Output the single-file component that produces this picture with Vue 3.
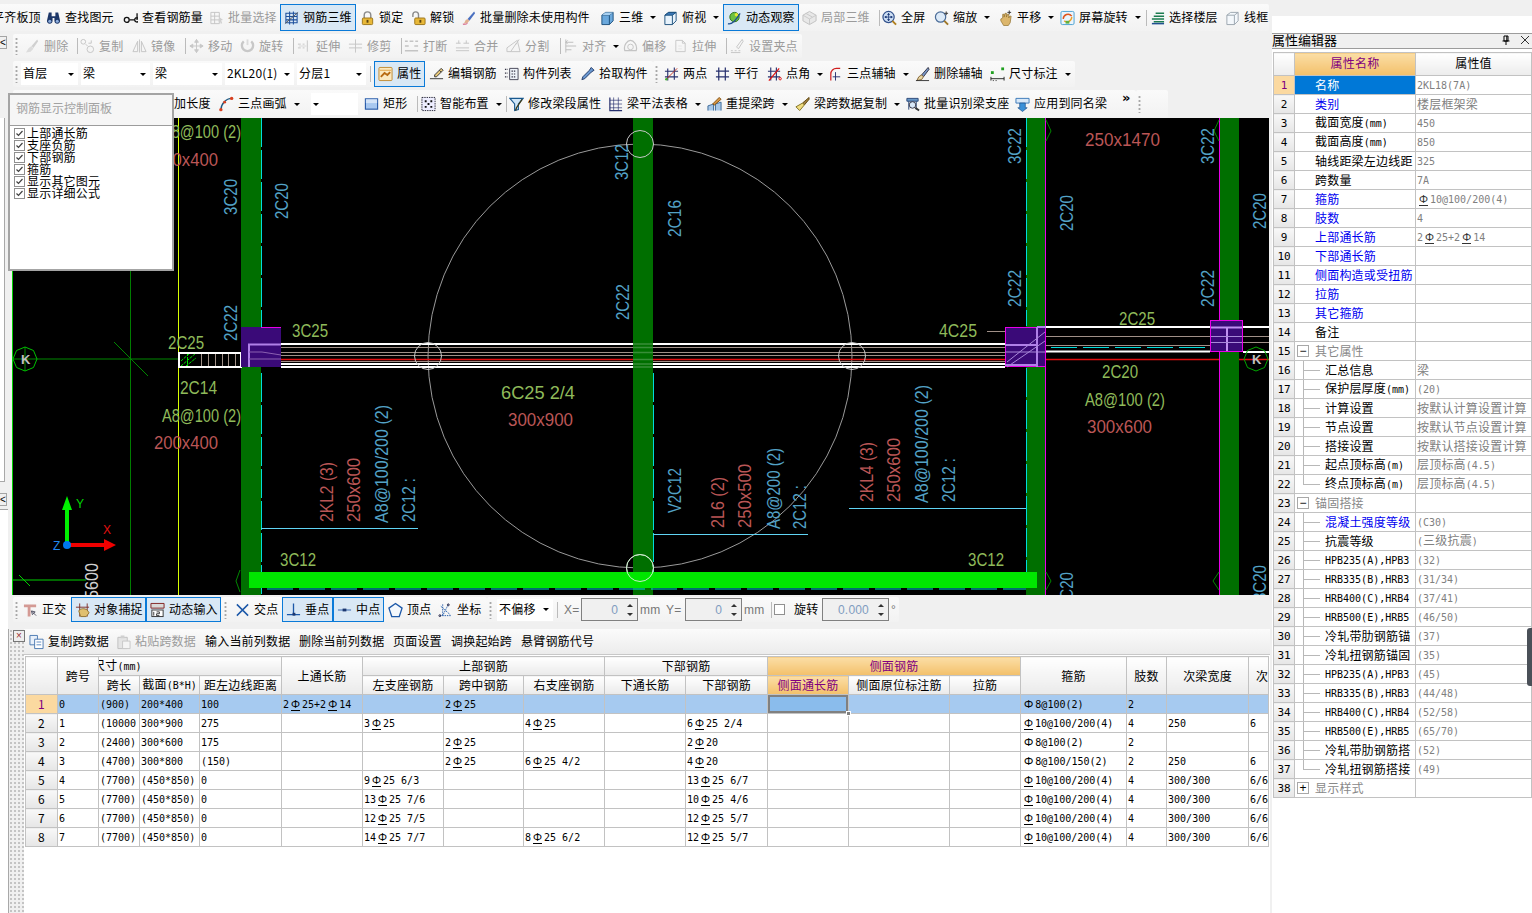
<script setup>
// toolbar icons, 16x16 boxes
const ic = {
  binoc: '<path d="M3 2h3v4h4V2h3l2 9a3 3 0 1 1-6 0V8H7v3a3 3 0 1 1-6 0z" fill="#1d3768"/><circle cx="4" cy="11.5" r="1.6" fill="#8fb0e0"/><circle cx="12" cy="11.5" r="1.6" fill="#8fb0e0"/>',
  glasses: '<circle cx="4" cy="10" r="2.6" fill="none" stroke="#111" stroke-width="1.4"/><path d="M9 10h3.5a2.3 2.3 0 1 0 0-.1M15 3v7M7 10h2" fill="none" stroke="#111" stroke-width="1.4"/>',
  batch: '<path d="M2 2h9v12H2zM2 6h9M2 10h9M6 2v12" fill="none" stroke="#c4c4c4"/><path d="M11 7l4 3-2 .5 1 3-1.500.5-1-3-1.500 1z" fill="#d0d0d0"/>',
  grid3d: '<path d="M2 3h12v10H2zM2 6.500h12M2 10h12M6 1v14M10 1v14" fill="none" stroke="#1c4f9c" stroke-width="1.100"/><path d="M1 14L15 2" stroke="#555"/>',
  lock: '<path d="M4.500 8V5a3.500 3.500 0 0 1 7 0v3" fill="none" stroke="#8a8a8a" stroke-width="1.500"/><rect x="2.500" y="8" width="11" height="7" rx="1" fill="#e8b838" stroke="#9c7418"/><rect x="7" y="10" width="2" height="3" fill="#5c4410"/>',
  unlock: '<path d="M2 7V4.500a3 3 0 0 1 6 0V8" fill="none" stroke="#8a8a8a" stroke-width="1.500"/><rect x="4" y="8" width="11" height="7" rx="1" fill="#e8b838" stroke="#9c7418"/><rect x="9" y="10" width="2" height="3" fill="#5c4410"/>',
  brush: '<path d="M14 1L7 9l2 2 6-8z" fill="#4a70c0"/><path d="M7 9l-2 1-2 4 4-1 2-2z" fill="#e0b090"/><path d="M2 14.500c2 .5 4 0 5-1" stroke="#d04070" fill="none"/>',
  cube: '<path d="M2 5l4-3h8v9l-4 4H2z" fill="#6aa8dc" stroke="#1c4f7c"/><path d="M2 5h8v10M10 5l4-3" fill="none" stroke="#1c4f7c"/><path d="M2 5h8l4-3H6z" fill="#a8d0f0"/>',
  cubeTop: '<path d="M2 5l4-3h8v9l-4 4H2z" fill="#e8f3fc" stroke="#1c4f7c"/><path d="M2 5l4-3h8l-4 3z" fill="#3a78b8" stroke="#1c4f7c"/><path d="M10 5v10" stroke="#1c4f7c"/>',
  orbit: '<circle cx="8" cy="7" r="5" fill="#6cc040" stroke="#2e7018"/><circle cx="10" cy="4.500" r="1.800" fill="#e4e830"/><path d="M1 14C4 15 8 13 14 3" fill="none" stroke="#205090" stroke-width="1.400"/>',
  cubeGray: '<path d="M8 1l7 4v6l-7 4-7-4V5z" fill="#e8e8e8" stroke="#c0c0c0"/><path d="M1 5l7 4 7-4M8 9v6M4 3l7 4" fill="none" stroke="#c8c8c8"/>',
  full: '<circle cx="7" cy="7" r="6" fill="#cfe0f4" stroke="#33528c" stroke-width="1.300"/><path d="M7 3v8M3 7h8M7 3L6 4.500h2zM7 11L6 9.500h2zM3 7l1.500-1v2zM11 7L9.500 6v2z" fill="#1c3a78" stroke="#1c3a78" stroke-width=".8"/><path d="M11 11l4 4" stroke="#b08020" stroke-width="2"/>',
  zoom: '<circle cx="7" cy="7" r="5.500" fill="#dceaf8" stroke="#4a6c98" stroke-width="1.300"/><path d="M11 11l4 4" stroke="#a07828" stroke-width="2"/><path d="M13 1v4M11 3h4" stroke="#333"/>',
  hand: '<path d="M3 9l2-1V4h1.500v3l1-4H9v4l1-3h1.500v4l1-2H14l-1 7-2 3H6L3 11z" fill="#dcb66c" stroke="#8c6c28" stroke-width=".7"/><path d="M12 0v4M10 2h4" stroke="#333"/>',
  spin: '<rect x="1" y="1" width="14" height="14" rx="1.500" fill="#eaf4fc" stroke="#48a0d0"/><path d="M3.500 9a5 5 0 0 1 9-3" fill="none" stroke="#e0561c" stroke-width="1.500"/><path d="M12.500 7a5 5 0 0 1-8 4" fill="none" stroke="#f0a020" stroke-width="1.500"/><rect x="6" y="11" width="4" height="3" fill="#60b040"/>',
  floors: '<path d="M6 3h9M4 6h11M2 9h13M4 12h11" stroke="#1c7c50" stroke-width="1.600"/><path d="M2 14h13" stroke="#205090" stroke-width="1.600"/>',
  wire: '<path d="M2 5l4-3h8v9l-4 4H2zM2 5h8v10M10 5l4-3" fill="#f4f8fc" stroke="#9aa4ae"/>',
  gBrush: '<path d="M13 1L7 8l2 2 5-7z" fill="#d0d0d0"/><path d="M7 8l-3 2-3 5 5-1 3-3z" fill="#dcdcdc"/>',
  gCopy: '<circle cx="3.500" cy="3.500" r="2.500" fill="none" stroke="#c4c4c4"/><circle cx="11" cy="11.500" r="3.500" fill="none" stroke="#c4c4c4"/><path d="M6 6l2 2M12 2v3h-3" fill="none" stroke="#c4c4c4"/>',
  gMirror: '<path d="M8 1v14M6 3L1 14h5zM10 3l5 11h-5z" fill="none" stroke="#c4c4c4"/>',
  gMove: '<path d="M8 1v14M1 8h14M8 1L6 4h4zM8 15l-2-3h4zM1 8l3-2v4zM15 8l-3-2v4z" fill="#c8c8c8" stroke="#c8c8c8"/>',
  gTurn: '<path d="M4 3a6 6 0 1 0 8 0" fill="none" stroke="#c8c8c8" stroke-width="2.500"/><path d="M8 1v6" stroke="#dcdcdc" stroke-width="2"/>',
  gExt: '<path d="M1 6h3M1 10h3M6 6h2M6 10h2M11 2v12" stroke="#c4c4c4" fill="none"/><path d="M10 8H2" stroke="#d8d8d8"/>',
  gTrim: '<path d="M1 6h14M1 10h14M8 1v14" stroke="#c4c4c4" fill="none"/>',
  gBreak: '<path d="M1 3h3M1 13h14M12 3h3M6 3h4M1 8h4M11 8h4" stroke="#c4c4c4" stroke-width="1.600" fill="none"/>',
  gJoin: '<path d="M1 5h5M9 5h6M1 10h14M1 13h14M4 2v3M12 2v3" stroke="#c4c4c4" fill="none"/>',
  gSplit: '<path d="M1 14h14L12 2 1 10zM5 14l6-9" fill="none" stroke="#c4c4c4"/><path d="M14 1l-4 6" stroke="#c4c4c4"/>',
  gAlign: '<path d="M3 1v14M3 4h8M3 8h11M3 12h6M5 2L3 4l2 2" fill="none" stroke="#bcbcbc"/>',
  gOffset: '<path d="M2 13c-2-6 3-11 6-11s8 5 6 11z" fill="none" stroke="#c4c4c4" stroke-width="1.300"/><circle cx="8" cy="9" r="3" fill="none" stroke="#c4c4c4"/>',
  gStretch: '<path d="M3 2h7l3 3v9H3zM10 2v3h3" fill="none" stroke="#c8c8c8"/><path d="M6 8h4M6 11h4" stroke="#d8d8d8" stroke-dasharray="1 1"/>',
  gGrip: '<path d="M13 1L7 9l2 2 5-8zM1 13h2M5 13h2M9 13h2M1 15h10" fill="none" stroke="#c4c4c4"/>',
  prop: '<rect x="1" y="1" width="14" height="14" rx="1" fill="#fbe9c0" stroke="#c08a30"/><path d="M3 11l4-4 3 2 3-3" fill="none" stroke="#b86a10" stroke-width="2"/><path d="M2 4h12" stroke="#e0a040"/>',
  edit: '<path d="M13 2l2 2-7 7H6V9zM1 13h14" fill="#e8c878" stroke="#333"/><path d="M11 4l2 2" stroke="#333"/>',
  list: '<path d="M6 2h9v12H6z" fill="#eef3fa" stroke="#445"/><path d="M1 3h3M1 7h3M1 11h3M8 5h5M8 8h5M8 11h5" stroke="#334" stroke-width="1.300" stroke-dasharray="1.500 1"/>',
  pick: '<path d="M12 1l3 3-3 2-7 7-3 1 1-3 7-7z" fill="#6a98d0" stroke="#223a68"/>',
  twoPt: '<path d="M4 2v13M11 1v13M1 5h14M1 11h14" stroke="#27306e" stroke-width="1.200"/><path d="M2 14L14 2" stroke="#c03020"/><circle cx="2.500" cy="13.500" r="1.300" fill="#40b030"/>',
  para: '<path d="M4 1v14M11 1v14M1 5h14M1 11h14" stroke="#27306e" stroke-width="1.300"/>',
  angle: '<path d="M4 1v14M10 1v14M1 5h13M1 11h13" stroke="#27306e" stroke-width="1.200"/><path d="M2 15L13 2" stroke="#e01010" stroke-width="1.300"/><circle cx="14" cy="13" r="1.300" fill="none" stroke="#e01010"/>',
  arcAx: '<path d="M3 15V8a6 6 0 0 1 6-6h4" fill="none" stroke="#d02020" stroke-width="1.300"/><path d="M8 6v9M5 11h8" stroke="#27306e"/>',
  delAx: '<path d="M14 1L7 9l2 2 6-8z" fill="#7a98c8" stroke="#334"/><path d="M7 9l-3 2-2 4 5-1 2-3z" fill="#e8d8a8" stroke="#806030"/><path d="M1 15h14" stroke="#333"/>',
  dim: '<path d="M1 11v4M15 11v4M1 13h14" stroke="#222"/><path d="M3 15h1M6 15h1" stroke="#222"/><rect x="1" y="5" width="3" height="3" fill="#20a020"/><rect x="12" y="1" width="3" height="3" fill="#20a020"/>',
  arc3: '<path d="M2 15C2 8 7 2 14 2" fill="none" stroke="#1c5880" stroke-width="1.400"/><circle cx="2" cy="14" r="1.800" fill="#d84020"/><circle cx="13.500" cy="2" r="1.800" fill="#d84020"/><circle cx="6" cy="6" r="1.500" fill="#d84020"/>',
  rect: '<rect x="1.500" y="2.500" width="13" height="11" fill="#a8c8f0" stroke="#285aa8" stroke-width="1.200"/><path d="M2 3h12v4H2z" fill="#d4e4f8"/>',
  smart: '<rect x="1" y="1" width="14" height="14" fill="#eef" stroke="#223" stroke-dasharray="1.500 1"/><path d="M4 4h2v2H4zM10 4h2v2h-2zM4 10h2v2H4zM10 10h2v2h-2zM7 7h2v2H7z" fill="#111"/>',
  funnel: '<path d="M1 2h14l-5 6v6l-4 1V8z" fill="#cfe6f8" stroke="#1a5a90" stroke-width="1.200"/><path d="M14 3l-6 9-1 3" fill="none" stroke="#3a3a18" stroke-width="1.400"/>',
  table: '<path d="M2 1v14h13" fill="none" stroke="#27306e" stroke-width="1.300"/><path d="M2 4h13M2 8h13M2 12h13M6 1v14M11 1v14" stroke="#27306e" stroke-width=".7"/>',
  refetch: '<path d="M1 15v-5l6-2v7M9 15V8l6-2v9" fill="#a8c8e8" stroke="#3a6898"/><path d="M13 1L6 8l2 1 7-6z" fill="#d89848" stroke="#805010"/>',
  broom: '<path d="M15 1L8 7l2 2 5-6z" fill="#a08040" stroke="#604810"/><path d="M8 7L1 11l4 4 5-6z" fill="#f0dc80" stroke="#807020"/>',
  scanb: '<path d="M2 2h12v3H2zM4 5v9M12 5v9" fill="#6898c8" stroke="#2a4878"/><circle cx="8" cy="9" r="3.500" fill="#d8e8f8" stroke="#334"/><path d="M11 12l4 3" stroke="#333" stroke-width="2"/>',
  apply: '<path d="M1 2h14v5H1z" fill="#d8e8f8" stroke="#3a78b8"/><path d="M5 7v5H3l5 4 5-4h-2V7z" fill="#3a90d8" stroke="#1a4c88" stroke-width=".7"/>',
  ortho: '<path d="M1 2h13v3H8v10H5V5H1z" fill="#d49a94"/><path d="M9 9l5 5M9 9l1 4 3-3z" fill="#e8e8f0" stroke="#556"/>',
  snap: '<path d="M5 1v14M13 1v14M1 5h14" stroke="#80302a"/><path d="M4 9c2-3 6-3 9-1l2 3-3 4H6z" fill="#e0c070" stroke="#907030"/>',
  dyn: '<path d="M1 1h14v5H1z" fill="#d8d8d8" stroke="#802020"/><rect x="2" y="8" width="12" height="7" fill="#fff" stroke="#333"/><path d="M4 10v4M7 10h3v2H7v2h3" fill="none" stroke="#333"/>',
  cross: '<path d="M2 2l12 12M14 2L2 14" stroke="#1c58a8" stroke-width="1.600"/>',
  perp: '<path d="M8 1v12M1 13h14" stroke="#1c58a8" stroke-width="1.400"/><rect x="7" y="11" width="3" height="3" fill="#1c3870"/>',
  mid: '<path d="M1 8h14" stroke="#6088c0" stroke-width="1.400"/><rect x="6" y="6.500" width="4" height="3" fill="#1c3870"/>',
  apex: '<path d="M8 1l7 5-3 9H4L1 6z" fill="#f4f8fc" stroke="#1c58a8" stroke-width="1.400"/>',
  coord: '<path d="M2 14h12M5 2v12M3 4l10 9M11 2L5 14" stroke="#1c58a8" stroke-dasharray="1.500 1"/><circle cx="11" cy="2.500" r="1" fill="none" stroke="#224"/><circle cx="2" cy="14" r="1" fill="none" stroke="#224"/>',
  copy: '<path d="M1 1h8v10H1z" fill="#e8f0fa" stroke="#4a78b0"/><path d="M6 5h9v10H6z" fill="#fff" stroke="#4a78b0"/><path d="M8 8h5M8 11h5" stroke="#5a88c0"/>',
  paste: '<path d="M2 3h10v12H2z" fill="#e4e4e4" stroke="#c0c0c0"/><path d="M5 1h4v3H5z" fill="#d0d0d0"/><path d="M7 7h8v8H7z" fill="#f4f4f4" stroke="#c8c8c8"/>'
}

// toolbar item builders
const it = (i, t, w, o = {}) => ({ kind: "item", i, t, w, ...o })
const sep = (w) => ({ kind: "sep", w })
const sp = (w) => ({ kind: "sp", w })
const grip = (w) => ({ kind: "grip", w })
const sel = (t, w) => ({ kind: "sel", t, w })
const lab = (t, w) => ({ kind: "lab", t, w })
const num = (t, w) => ({ kind: "num", t, w })
const off = { dis: true }
const on = { act: true }
const dd = { caret: true }

const row1 = [[
  it(null, "平齐板顶", 54), it("binoc", "查找图元", 77), it("glasses", "查看钢筋量", 86),
  it("batch", "批量选择", 71, off), it("grid3d", "钢筋三维", 76, on), sp(4),
  it("lock", "锁定", 51), it("unlock", "解锁", 50), it("brush", "批量删除未使用构件", 139),
  it("cube", "三维", 63, dd), it("cubeTop", "俯视", 60, dd), it("orbit", "动态观察", 76, on), sp(3),
  it("cubeGray", "局部三维", 74, off), sep(6), it("full", "全屏", 52), it("zoom", "缩放", 64, dd),
  it("hand", "平移", 62, dd), it("spin", "屏幕旋转", 82, dd), sep(8),
  it("floors", "选择楼层", 75), it("wire", "线框", 44)
]]
const row2 = [[
  grip(12), it("gBrush", "删除", 49, off), sep(6), it("gCopy", "复制", 52, off), it("gMirror", "镜像", 50, off), sep(7),
  it("gMove", "移动", 51, off), it("gTurn", "旋转", 50, off), sep(7), it("gExt", "延伸", 51, off), it("gTrim", "修剪", 50, off), sep(6),
  it("gBreak", "打断", 51, off), it("gJoin", "合并", 51, off), it("gSplit", "分割", 51, off), sep(6),
  it("gAlign", "对齐", 60, { dis: true, caret: true }), it("gOffset", "偏移", 50, off), it("gStretch", "拉伸", 50, off), sep(7),
  it("gGrip", "设置夹点", 72, off)
]]
const row3 = [[
  grip(8), sel("首层", 57), sp(3), sel("梁", 69), sp(3), sel("梁", 69), sp(3), sel("2KL20(1)", 69), sp(3), sel("分层1", 69), sep(8),
  it("prop", "属性", 51, on), sp(4), it("edit", "编辑钢筋", 75), it("list", "构件列表", 76), it("pick", "拾取构件", 73)
], [
  grip(11), it("twoPt", "两点", 51), it("para", "平行", 52), it("angle", "点角", 61, dd),
  it("arcAx", "三点辅轴", 87, dd), it("delAx", "删除辅轴", 75), it("dim", "尺寸标注", 85, dd)
]]
const row4 = [[
  sp(161), it(null, "加长度", 45), it("arc3", "三点画弧", 92, dd), sel("", 47), sp(6), it("rect", "矩形", 50), sep(7),
  it("smart", "智能布置", 82, dd), sep(6), it("funnel", "修改梁段属性", 99), it("table", "梁平法表格", 99, dd),
  it("refetch", "重提梁跨", 88, dd), it("broom", "梁跨数据复制", 110, dd), it("scanb", "批量识别梁支座", 110), it("apply", "应用到同名梁", 107),
  lab("»", 14)
], [grip(32)]]
const snapRow = [[
  grip(10), it("ortho", "正交", 48), it("snap", "对象捕捉", 75, on), it("dyn", "动态输入", 75, on), sp(1)
], [
  grip(13), it("cross", "交点", 47), it("perp", "垂点", 51, on), it("mid", "中点", 51, on), sp(4), it("apex", "顶点", 50), it("coord", "坐标", 49)
], [
  grip(10), sel("不偏移", 56), sep(9), lab("X=", 19), num("0", 57), lab("mm", 26), lab("Y=", 21), num("0", 57), lab("mm", 27), sep(5),
  { kind: "check", w: 11 }, sp(9), { kind: "plain", t: "旋转", w: 28 }, num("0.000", 67), lab("°", 10)
]]
const gridBar = [[
  sp(5), it("copy", "复制跨数据", 87), it("paste", "粘贴跨数据", 89, off), it(null, "输入当前列数据", 94), it(null, "删除当前列数据", 94),
  it(null, "页面设置", 58), it(null, "调换起始跨", 70), it(null, "悬臂钢筋代号", 90)
]]

// split a string so latin runs take the narrow mono face and rebar marks their symbol
const runs = (s) =>
  String(s).match(/[ -~]+|[ΦФ]|[^ -~ΦФ]+/g)?.map((t) => ({
    t,
    c: /^[ -~]/.test(t) ? "mono" : t === "Φ" ? "sym" : t === "Ф" ? "sym under" : ""
  })) ?? []

const colW = [32, 41, 41, 60, 82, 81, 81, 80, 81, 81, 82, 81, 101, 71, 106, 40, 82, 20]
const R = "Ф10@100/200(4)"
const gridRows = [
  ["0", "(900)", "200*400", "100", "2Ф25+2Ф14", "", "2Ф25", "", "", "", "", "", "", "Φ8@100(2)", "2", "", ""],
  ["1", "(10000", "300*900", "275", "", "3Ф25", "", "4Ф25", "", "6Ф25 2/4", "", "", "", R, "4", "250", "6"],
  ["2", "(2400)", "300*600", "175", "", "", "2Ф25", "", "", "2Ф20", "", "", "", "Φ8@100(2)", "2", "", ""],
  ["3", "(4700)", "300*800", "(150)", "", "", "2Ф25", "6Ф25 4/2", "", "4Ф20", "", "", "", "Φ8@100/150(2)", "2", "250", "6"],
  ["4", "(7700)", "(450*850)", "0", "", "9Ф25 6/3", "", "", "", "13Ф25 6/7", "", "", "", R, "4", "300/300", "6/6"],
  ["5", "(7700)", "(450*850)", "0", "", "13Ф25 7/6", "", "", "", "10Ф25 4/6", "", "", "", R, "4", "300/300", "6/6"],
  ["6", "(7700)", "(450*850)", "0", "", "12Ф25 7/5", "", "", "", "12Ф25 5/7", "", "", "", R, "4", "300/300", "6/6"],
  ["7", "(7700)", "(450*850)", "0", "", "14Ф25 7/7", "", "8Ф25 6/2", "", "12Ф25 5/7", "", "", "", R, "4", "300/300", "6/6"]
]

// property rows: name, value, link colour, kind
const p = (n, v = "", o = {}) => ({ n, v, ...o })
const blue = { blue: true }
const kid = { kid: true }
const props = [
  p("名称", "2KL18(7A)", { blue: true, cur: true }), p("类别", "楼层框架梁", blue), p("截面宽度(mm)", "450"), p("截面高度(mm)", "850"),
  p("轴线距梁左边线距", "325"), p("跨数量", "7A"), p("箍筋", "Ф10@100/200(4)", blue), p("肢数", "4", blue),
  p("上部通长筋", "2Ф25+2Ф14", blue), p("下部通长筋", "", blue), p("侧面构造或受扭筋", "", blue), p("拉筋", "", blue), p("其它箍筋", "", blue), p("备注"),
  p("其它属性", "", { grp: "−" }),
  p("汇总信息", "梁", kid), p("保护层厚度(mm)", "(20)", kid), p("计算设置", "按默认计算设置计算", kid), p("节点设置", "按默认节点设置计算", kid),
  p("搭接设置", "按默认搭接设置计算", kid), p("起点顶标高(m)", "层顶标高(4.5)", kid), p("终点顶标高(m)", "层顶标高(4.5)", { kid: true, last: true }),
  p("锚固搭接", "", { grp: "−" }),
  p("混凝土强度等级", "(C30)", { kid: true, blue: true }), p("抗震等级", "(三级抗震)", kid), p("HPB235(A),HPB3", "(32)", kid), p("HRB335(B),HRB3", "(31/34)", kid),
  p("HRB400(C),HRB4", "(37/41)", kid), p("HRB500(E),HRB5", "(46/50)", kid), p("冷轧带肋钢筋锚", "(37)", kid), p("冷轧扭钢筋锚固", "(35)", kid),
  p("HPB235(A),HPB3", "(45)", kid), p("HRB335(B),HRB3", "(44/48)", kid), p("HRB400(C),HRB4", "(52/58)", kid), p("HRB500(E),HRB5", "(65/70)", kid),
  p("冷轧带肋钢筋搭", "(52)", kid), p("冷轧扭钢筋搭接", "(49)", { kid: true, last: true }),
  p("显示样式", "", { grp: "+" })
]

const checks = ["上部通长筋", "支座负筋", "下部钢筋", "箍筋", "显示其它图元", "显示详细公式"]

// drawing labels: text, x, y (baseline start), drawn length, colour, vertical
const L = (t, x, y, w, c, v) => ({ t, x, y, w, c, v })
const labels = [
  L("3C25", 292, 337, 36, "g"), L("2C25", 168, 349, 36, "g"), L("A8@100 (2)", 162, 138, 79, "g"), L("200x400", 154, 166, 64, "r"),
  L("2C14", 180, 394, 37, "g"), L("A8@100 (2)", 162, 422, 79, "g"), L("200x400", 154, 449, 64, "r"),
  L("6C25  2/4", 501, 399, 74, "g"), L("300x900", 508, 426, 65, "r"), L("4C25", 939, 337, 38, "g"), L("2C25", 1119, 325, 36, "g"),
  L("2C20", 1102, 378, 36, "g"), L("A8@100 (2)", 1085, 406, 80, "g"), L("300x600", 1087, 433, 65, "r"), L("250x1470", 1085, 146, 75, "r"),
  L("3C12", 280, 566, 36, "g"), L("3C12", 968, 566, 36, "g"),
  L("3C20", 237, 215, 36, "b", 1), L("2C20", 288, 219, 36, "b", 1), L("2C22", 237, 341, 36, "b", 1), L("3C12", 628, 180, 36, "b", 1),
  L("2C16", 681, 237, 37, "b", 1), L("2C22", 629, 320, 36, "b", 1), L("3C22", 1021, 164, 36, "b", 1), L("2C20", 1073, 231, 36, "b", 1),
  L("2C22", 1021, 307, 37, "b", 1), L("3C22", 1214, 164, 36, "b", 1), L("2C20", 1266, 229, 36, "b", 1), L("2C22", 1214, 307, 37, "b", 1),
  L("2KL2 (3)", 333, 522, 60, "r", 1), L("250x600", 360, 522, 64, "r", 1), L("A8@100/200 (2)", 388, 523, 118, "b", 1), L("2C12 :", 415, 522, 44, "b", 1),
  L("V2C12", 681, 513, 45, "b", 1), L("2L6 (2)", 724, 528, 51, "r", 1), L("250x500", 751, 528, 64, "r", 1), L("A8@200 (2)", 780, 529, 81, "b", 1), L("2C12 :", 806, 529, 44, "b", 1),
  L("2KL4 (3)", 873, 502, 60, "r", 1), L("250x600", 900, 502, 64, "r", 1), L("A8@100/200 (2)", 928, 503, 118, "b", 1), L("2C12 :", 955, 502, 44, "b", 1),
  L("3C20", 1073, 608, 36, "b", 1), L("3C20", 1266, 601, 36, "b", 1), L("5600", 98, 599, 36, "w", 1)
]
const columns = [241, 633, 1026, 1219]
const hatch = [201, 208, 215, 222, 228, 235]
const bulbs = [[428, 356], [852, 356], [640, 568], [640, 144]]
const bays = [1051, 1083, 1115, 1147, 1179]
</script>

<template>
  <div class="app">
    <div class="main">
      <div class="row r1">
        <div v-for="(band, b) in row1" :key="b" class="band first">
          <template v-for="(x, n) in band" :key="n">
            <div v-if="x.kind === 'item'" class="item" :class="{ dis: x.dis, act: x.act }" :style="{ width: x.w + 'px' }">
              <svg v-if="x.i" class="ic" viewBox="0 0 16 16" v-html="ic[x.i]"></svg><span class="tx">{{ x.t }}</span><i v-if="x.caret" class="caret"></i>
            </div>
            <div v-else-if="x.kind === 'sep'" class="sep" :style="{ width: x.w + 'px' }"></div>
            <div v-else :style="{ width: x.w + 'px' }"></div>
          </template>
        </div>
      </div>

      <div v-for="(rw, r) in [row2, row3, row4]" :key="r" class="row" :class="'r' + (r + 2)">
        <div v-for="(band, b) in rw" :key="b" class="band" :class="{ grow: r === 2 }">
          <template v-for="(x, n) in band" :key="n">
            <div v-if="x.kind === 'item'" class="item" :class="{ dis: x.dis, act: x.act }" :style="{ width: x.w + 'px' }">
              <svg v-if="x.i" class="ic" viewBox="0 0 16 16" v-html="ic[x.i]"></svg><span class="tx">{{ x.t }}</span><i v-if="x.caret" class="caret"></i>
            </div>
            <div v-else-if="x.kind === 'sep'" class="sep" :style="{ width: x.w + 'px' }"></div>
            <div v-else-if="x.kind === 'grip'" class="grip" :style="{ width: x.w + 'px' }"></div>
            <div v-else-if="x.kind === 'sel'" class="sel" :style="{ width: x.w + 'px' }">{{ x.t }}<i class="caret"></i></div>
            <div v-else-if="x.kind === 'lab'" class="more" :style="{ width: x.w + 'px' }">{{ x.t }}</div>
            <div v-else :style="{ width: x.w + 'px' }"></div>
          </template>
        </div>
      </div>

      <div class="work">
        <div class="gutter"><div class="rail"></div></div>
        <svg class="cad" width="1257" height="477" viewBox="12 118 1257 477">
          <rect x="12" y="118" width="1257" height="477" fill="#000" />
          <!-- axes and helper lines -->
          <path d="M12.500 118V595" stroke="#00d000" />
          <path d="M130.500 270V595" stroke="#007c00" />
          <path d="M13 359H178M114 342L148 376M25 347V371" stroke="#008800" />
          <path d="M13 580H86M19 575L30 586" stroke="#00d000" />
          <path d="M178.500 118V595" stroke="#d8ff00" />
          <!-- big circle -->
          <circle cx="640" cy="356" r="212" fill="none" stroke="#9a9a9a" />
          <!-- beam -->
          <path d="M281 347.500H1005M281 352.500H1005M281 355.500H1005M281 361.500H1005" stroke="#a09088" />
          <path d="M281 359.500H1005M1046 359.500H1219M1239 359.500H1269" stroke="#e01010" stroke-width="1.500" />
          <path d="M281 344H1005M281 364H1005M281 367H1005" stroke="#fff" stroke-width="2" />
          <path d="M1046 327H1210M1046 351.500H1210M1243 327H1269M1243 352H1269" stroke="#fff" stroke-width="2" />
          <path d="M1046 336.500H1210M1046 345.500H1210M1243 336.500H1269M1243 342.500H1269" stroke="#a09088" />
          <rect v-for="d in bays" :key="d" :x="d" y="347" width="26" height="1" fill="#00dcdc" />
          <!-- columns -->
          <rect v-for="c in columns" :key="c" :x="c" y="118" width="20" height="477" fill="#006f00" />
          <path d="M633 344H653M633 347.500H653M633 352.500H653M633 359.500H653M633 364H653M633 367H653" stroke="#fff" stroke-opacity=".22" stroke-width="1.500" />
          <path d="M261.500 118V343M261.500 373V595M653.500 373V572M1026.500 118V326M1026.500 368V572" stroke="#00dcdc" stroke-dasharray="29 3" />
          <path d="M267 589H1026" stroke="#00dcdc" stroke-dasharray="26 6" />
          <path d="M1045.500 118V595M1219.500 118V595" stroke="#e800e8" />
          <circle v-for="b in bulbs" :key="b[0] + '-' + b[1]" :cx="b[0]" :cy="b[1]" r="13.500" fill="none" stroke="#c8c8c8" />
          <!-- leaders -->
          <path d="M261 528.500H418M653 534.500H808M849 508.500H1026" stroke="#60d4f4" />
          <path d="M987 331.500H1005" stroke="#a09088" />
          <rect x="249" y="572" width="788" height="16" fill="#00e600" />
          <circle cx="640" cy="568" r="13.500" fill="none" stroke="#c8f0c8" />
          <!-- stub beam at the left -->
          <path v-for="h in hatch" :key="h" :d="`M${h}.5 353V367`" stroke="#a09088" />
          <path d="M187.500 353V367M181 366L196 353M181 361L190 353M186 366L196 358" stroke="#00e000" stroke-dasharray="3 1" />
          <rect x="179" y="353" width="62" height="14" fill="none" stroke="#fff" stroke-width="2" />
          <!-- purple joints -->
          <rect x="241" y="327" width="40" height="40" fill="#3a0a78" />
          <path d="M261 327.500H281" stroke="#e800e8" />
          <path d="M249 367V344.500H281" fill="none" stroke="#b080e8" stroke-width="2" />
          <path d="M249 352H262L281 355M249 359H281" stroke="#8a60b0" fill="none" />
          <rect x="1005.500" y="327.500" width="40" height="39" fill="#3a0a78" stroke="#e800e8" />
          <path d="M1037 327V367M1037 327H1046M1005 345H1037M1005 365H1037" stroke="#b080e8" stroke-width="2" />
          <path d="M1007 362L1045 332M1007 367L1045 341M1005 352H1045" stroke="#a888d8" />
          <rect x="1210.500" y="320.500" width="32" height="31" fill="#3a0a78" stroke="#e800e8" />
          <path d="M1211 327.500H1242M1227 327V351" stroke="#c090f0" stroke-width="2" fill="none" />
          <path d="M1211 342.500H1242M1211 336.500H1242" stroke="#a888d8" />
          <!-- end marks -->
          <path d="M1046 120L1051 131L1046 141M1219 120L1214 131L1219 141M1046 572L1051 581L1046 590M1219 572L1213 581L1219 590M240 570L236 581L240 592" fill="none" stroke="#008800" />
          <polygon points="25,347 33.500,350.500 37,359 33.500,367.500 25,371 16.500,367.500 13,359 16.500,350.500" fill="none" stroke="#00c000" />
          <polygon points="1256,347 1264.500,350.500 1268,359 1264.500,367.500 1256,371 1247.500,367.500 1244,359 1247.500,350.500" fill="none" stroke="#00a800" />
          <text x="21" y="364" class="axis-k">K</text>
          <text x="1252" y="364" class="axis-k">K</text>
          <!-- labels -->
          <text
            v-for="(l, n) in labels"
            :key="n"
            :x="l.x"
            :y="l.y"
            :class="'lb-' + l.c"
            class="lb"
            :textLength="l.w"
            lengthAdjust="spacingAndGlyphs"
            :transform="l.v ? `rotate(-90 ${l.x} ${l.y})` : null"
          >{{ l.t }}</text>
          <!-- ucs -->
          <path d="M65 545V510H62L67 496L72 510H69V545z" fill="#00f000" />
          <path d="M67 543H104V539L116 545L104 551V547H67z" fill="#f00000" />
          <circle cx="67" cy="545" r="4" fill="#0078f0" />
          <text x="76" y="508" class="ucs" fill="#00d800">Y</text>
          <text x="103" y="534" class="ucs" fill="#e01010">X</text>
          <text x="53" y="550" class="ucs" fill="#2088f0">Z</text>
        </svg>
      </div>

      <div class="row snap">
        <div v-for="(band, b) in snapRow" :key="b" class="band">
          <template v-for="(x, n) in band" :key="n">
            <div v-if="x.kind === 'item'" class="item" :class="{ act: x.act }" :style="{ width: x.w + 'px' }">
              <svg class="ic" viewBox="0 0 16 16" v-html="ic[x.i]"></svg><span class="tx">{{ x.t }}</span>
            </div>
            <div v-else-if="x.kind === 'sep'" class="sep" :style="{ width: x.w + 'px' }"></div>
            <div v-else-if="x.kind === 'grip'" class="grip" :style="{ width: x.w + 'px' }"></div>
            <div v-else-if="x.kind === 'sel'" class="sel" :style="{ width: x.w + 'px' }">{{ x.t }}<i class="caret"></i></div>
            <div v-else-if="x.kind === 'lab'" class="unit" :style="{ width: x.w + 'px' }">{{ x.t }}</div>
            <div v-else-if="x.kind === 'plain'" class="plain" :style="{ width: x.w + 'px' }">{{ x.t }}</div>
            <div v-else-if="x.kind === 'num'" class="num" :style="{ width: x.w + 'px' }">
              <span>{{ x.t }}</span>
              <b class="spin"><i class="up"></i><i class="down"></i></b>
            </div>
            <div v-else-if="x.kind === 'check'" class="box"></div>
            <div v-else :style="{ width: x.w + 'px' }"></div>
          </template>
        </div>
      </div>

      <div class="lower">
        <div class="dots">
          <span class="closer">×</span>
        </div>
        <div class="sheet">
          <div class="gridbar">
            <template v-for="(x, n) in gridBar[0]" :key="n">
              <div v-if="x.kind === 'item'" class="item" :class="{ dis: x.dis }" :style="{ width: x.w + 'px' }">
                <svg v-if="x.i" class="ic" viewBox="0 0 16 16" v-html="ic[x.i]"></svg><span class="tx">{{ x.t }}</span>
              </div>
              <div v-else :style="{ width: x.w + 'px' }"></div>
            </template>
          </div>
          <table class="grid">
            <colgroup>
              <col v-for="(w, n) in colW" :key="n" :style="{ width: w + 'px' }" />
            </colgroup>
            <thead>
              <tr>
                <th rowspan="2"></th>
                <th rowspan="2">跨号</th>
                <th colspan="3" class="size">尺寸<span class="mono">(mm)</span></th>
                <th rowspan="2">上通长筋</th>
                <th colspan="3">上部钢筋</th>
                <th colspan="2">下部钢筋</th>
                <th colspan="3" class="hot">侧面钢筋</th>
                <th rowspan="2">箍筋</th>
                <th rowspan="2">肢数</th>
                <th rowspan="2">次梁宽度</th>
                <th rowspan="2" class="cut">次梁肋筋</th>
              </tr>
              <tr>
                <th>跨长</th>
                <th>截面<span class="mono">(B*H)</span></th>
                <th>距左边线距离</th>
                <th>左支座钢筋</th>
                <th>跨中钢筋</th>
                <th>右支座钢筋</th>
                <th>下通长筋</th>
                <th>下部钢筋</th>
                <th class="hot">侧面通长筋</th>
                <th>侧面原位标注筋</th>
                <th>拉筋</th>
              </tr>
            </thead>
            <tbody>
              <tr v-for="(row, r) in gridRows" :key="r" :class="{ picked: r === 0 }">
                <td class="rn">{{ r + 1 }}</td>
                <td
                  v-for="(cell, c) in row"
                  :key="c"
                  :class="{ frozen: c === 1, cursor: r === 0 && c === 10 }"
                >
                  <span v-for="(s, k) in runs(cell)" :key="k" :class="s.c">{{ s.t }}</span>
                </td>
              </tr>
            </tbody>
          </table>
        </div>
      </div>

      <!-- floating rebar panel -->
      <div class="float">
        <div class="float-title">钢筋显示控制面板</div>
        <div class="float-body">
          <div v-for="c in checks" :key="c" class="chk">
            <svg class="chk-box" viewBox="0 0 11 11"><rect x=".5" y=".5" width="10" height="10" fill="#fff" stroke="#909090" /><path d="M2.500 5.500L4.500 7.500L8.500 3" fill="none" stroke="#404040" stroke-width="1.200" /></svg>
            <span>{{ c }}</span>
          </div>
        </div>
      </div>
      <div class="tab t1">&lt;</div>
      <div class="tab t2">&lt;</div>
      <div class="low-rail"></div>
    </div>

    <aside class="panel">
      <div class="panel-title">
        <span>属性编辑器</span>
        <svg class="pin" viewBox="0 0 10 10"><path d="M3 1h4v5H3zM1.500 6h7M5 6v4M5.800 1v5" fill="none" stroke="#000" /></svg>
        <svg class="shut" viewBox="0 0 10 10"><path d="M1 1l8 8M9 1l-8 8" stroke="#333" /></svg>
      </div>
      <table class="ptable">
        <colgroup>
          <col class="c0" /><col class="c1" /><col class="c2" />
        </colgroup>
        <thead>
          <tr>
            <th></th>
            <th class="hot">属性名称</th>
            <th>属性值</th>
          </tr>
        </thead>
        <tbody>
          <tr v-for="(x, n) in props" :key="n">
            <td class="rn" :class="{ first: n === 0 }"><span class="mono wide">{{ n + 1 }}</span></td>
            <td class="name" :class="{ blue: x.blue, cur: x.cur, grp: x.grp, kid: x.kid, last: x.last }">
              <i v-if="x.grp" class="fold">{{ x.grp }}</i>
              <span v-for="(s, k) in runs(x.n)" :key="k" :class="s.c">{{ s.t }}</span>
            </td>
            <td class="val">
              <span v-for="(s, k) in runs(x.v)" :key="k" :class="s.c">{{ s.t }}</span>
            </td>
          </tr>
        </tbody>
      </table>
    </aside>
    <div class="phone"></div>
  </div>
</template>

<style scoped>
.app {
  position: relative;
  display: flex;
  width: 1532px;
  height: 913px;
  overflow: hidden;
  background: #f0f0f0;
  color: #000;
  font: 12px/16px "Noto Sans CJK SC", "Liberation Sans", sans-serif;
  letter-spacing: 0.2px;
}

.main {
  position: relative;
  width: 1272px;
  flex: none;
  display: flex;
  flex-direction: column;
}

.row {
  display: flex;
  flex: none;
  overflow: hidden;
}
.r1 {
  height: 27px;
  margin-top: 4px;
}
.r2 {
  height: 24px;
  margin: 3px 0 0 13px;
}
.r3 {
  height: 26px;
  margin: 3px 0 0 13px;
}
.r4 {
  height: 28px;
  margin: 3px 0 0 13px;
  width: 1257px;
}
.snap {
  height: 25px;
  margin: 2px 0 0 13px;
}

.band {
  display: flex;
  align-items: center;
  flex: none;
  background: linear-gradient(#fafafa, #f2f2f2);
  border-radius: 2px;
}
.band.first {
  margin-left: -8px;
}

.item {
  display: flex;
  align-items: center;
  flex: none;
  height: 100%;
  box-sizing: border-box;
  white-space: nowrap;
  overflow: hidden;
}
.tx {
  padding-bottom: 2px;
}
.r2 .tx {
  padding-bottom: 0;
}
.item.dis {
  color: #9b9b9b;
}
.item.act {
  border: 1px solid #0a7ad8;
  background: #d9e8f5;
  padding-left: 3px;
}
.ic {
  width: 15px;
  height: 16px;
  flex: none;
  margin-right: 4px;
}
.caret {
  flex: none;
  margin-left: 7px;
  border: 3px solid transparent;
  border-top: 3px solid #000;
  border-bottom: 0;
}
.sep {
  flex: none;
  align-self: center;
  height: 16px;
  background: linear-gradient(#bbb, #bbb) center / 1px 100% no-repeat;
}
.grip {
  flex: none;
  height: 18px;
  background: radial-gradient(circle, #a8a8a8 1px, transparent 1.2px) 2px 0 / 3px 4px repeat-y;
}
.sel {
  display: flex;
  align-items: center;
  justify-content: space-between;
  flex: none;
  box-sizing: border-box;
  height: 22px;
  padding: 0 4px 2px 2px;
  background: #fff;
  white-space: nowrap;
}
.sel .caret {
  margin: 2px 0 0;
}
.more {
  flex: none;
  font: bold 13px/13px "DejaVu Sans", sans-serif;
  align-self: flex-start;
  margin-top: 1px;
}
.unit {
  flex: none;
  color: #777;
  font: 12px/16px "Liberation Sans", sans-serif;
  padding-left: 2px;
  box-sizing: border-box;
}
.plain {
  flex: none;
  padding-bottom: 2px;
}
.num {
  display: flex;
  align-items: center;
  justify-content: flex-end;
  flex: none;
  box-sizing: border-box;
  height: 23px;
  padding-right: 2px;
  border: 1px solid #808080;
  background: #f0f0f0;
  color: #7f9cc0;
  font: 12px/16px "Liberation Sans", sans-serif;
}
.spin {
  display: flex;
  flex-direction: column;
  gap: 6px;
  margin-left: 9px;
  padding-right: 2px;
}
.up,
.down {
  display: block;
  border: 3px solid transparent;
}
.up {
  border-bottom: 3px solid #333;
  border-top: 0;
}
.down {
  border-top: 3px solid #333;
  border-bottom: 0;
}
.box {
  flex: none;
  width: 11px;
  height: 11px;
  box-sizing: border-box;
  border: 1px solid #909090;
  background: #fff;
}

.work {
  display: flex;
  flex: none;
  height: 477px;
}
.gutter {
  width: 12px;
  flex: none;
}
.rail {
  width: 5px;
  height: 364px;
  box-sizing: border-box;
  border-right: 1px solid #a8a8a8;
  border-bottom: 1px solid #a8a8a8;
  background: #fff;
}
.cad {
  display: block;
  flex: none;
}
.lb {
  font: 19px "Liberation Sans", sans-serif;
  letter-spacing: 0;
}
.lb-g {
  fill: #8fba5a;
}
.lb-r {
  fill: #ba5656;
}
.lb-b {
  fill: #53a2c6;
}
.lb-w {
  fill: #d0d0d0;
}
.axis-k {
  font: bold 13px "Liberation Sans", sans-serif;
  fill: #c0c0c0;
}
.ucs {
  font: 12px "Liberation Sans", sans-serif;
}

.lower {
  display: flex;
  flex: 1;
  margin-top: 7px;
  min-height: 0;
}
.dots {
  position: relative;
  flex: none;
  width: 15px;
  margin-left: 8px;
  border-left: 1px solid #a8a8a8;
  background: radial-gradient(circle, #c4c4c4 0.8px, transparent 1px) 0 0 / 4px 4px;
}
.closer {
  position: absolute;
  left: 4px;
  top: 1px;
  width: 10px;
  height: 10px;
  border: 1px solid #777;
  background: #eee;
  color: #a03030;
  font: 10px/9px "Liberation Sans", sans-serif;
  text-align: center;
  letter-spacing: 0;
}
.sheet {
  width: 1246px;
  flex: none;
  background: #fff;
  overflow: hidden;
}
.gridbar {
  display: flex;
  align-items: center;
  height: 26px;
  margin-bottom: 1px;
  background: linear-gradient(#fbfbfb, #ececec);
  border-bottom: 1px solid #c8c8c8;
  box-sizing: border-box;
}

.grid,
.ptable {
  table-layout: fixed;
  border-collapse: collapse;
  background: #fff;
}
.grid {
  width: 1243px;
  margin-left: 1px;
}
.grid th,
.grid td,
.ptable th,
.ptable td {
  border: 1px solid #c2c2c2;
  box-sizing: border-box;
  height: 19px;
  padding: 0;
  overflow: hidden;
  white-space: nowrap;
  font-weight: 400;
  line-height: 16px;
}
.grid th {
  background: linear-gradient(#ffffff, #eaeaea);
  text-align: center;
}
.grid th.size {
  text-align: left;
  text-indent: -6px;
}
.grid th.cut {
  text-align: left;
  padding-left: 7px;
}
.grid .hot,
.ptable .hot {
  background: linear-gradient(#fbdea6, #f3c06a);
  color: #800080;
}
.grid td {
  padding-left: 1px;
}
.grid td.rn,
.ptable td.rn {
  padding: 0;
  background: linear-gradient(#f8f8f8, #e6e6e6);
  text-align: center;
}
.grid td.frozen {
  border-left: 1px solid #222;
}
.picked td {
  background: #a6caf0;
}
.grid .picked td.rn {
  background: #fbd9a0;
  color: #800080;
}
.grid td.cursor {
  position: relative;
  overflow: visible;
  background: #8abcec;
  box-shadow: inset 0 0 0 2px #808080;
}
.grid td.cursor::after {
  content: "";
  position: absolute;
  right: -3px;
  bottom: -3px;
  width: 5px;
  height: 5px;
  background: #808080;
  border: 1px solid #fff;
  box-sizing: border-box;
}

.mono {
  font: 10px/16px "DejaVu Sans Mono", "Liberation Mono", monospace;
  letter-spacing: 0;
}
.mono.wide {
  font-size: 11px;
}
.sym {
  margin: 0 2px;
  font: 11px/16px "Noto Sans", sans-serif;
  letter-spacing: 0;
}
.sym.under {
  box-shadow: inset 0 -3px 0 -2px #000;
}

.float {
  position: absolute;
  left: 8px;
  top: 93px;
  width: 166px;
  height: 178px;
  box-sizing: border-box;
  border: 2px solid #a4a4a4;
  border-right-width: 2px;
  background: #f6f6f6;
}
.float-title {
  height: 30px;
  padding-left: 6px;
  color: #a2a2a2;
  line-height: 26px;
  letter-spacing: 0;
}
.float-body {
  box-sizing: border-box;
  height: 144px;
  padding: 1px 0 0 4px;
  border-top: 1px solid #9c9c9c;
  background: #fff;
}
.chk {
  display: flex;
  align-items: center;
  height: 12px;
  line-height: 12px;
  white-space: nowrap;
}
.chk-box {
  width: 11px;
  height: 11px;
  flex: none;
  margin-right: 2px;
}
.tab {
  position: absolute;
  left: -1px;
  width: 8px;
  height: 13px;
  box-sizing: border-box;
  border: 1px solid #a4a4a4;
  border-left: 0;
  font: 10px/11px "Liberation Sans", sans-serif;
  text-align: right;
}
.t1 {
  top: 36px;
}
.t2 {
  top: 493px;
}
.low-rail {
  position: absolute;
  left: 0;
  top: 509px;
  bottom: 0;
  width: 8px;
  box-sizing: border-box;
  border-top: 1px solid #a4a4a4;
  background: #fff;
}

.panel {
  flex: 1;
  min-width: 0;
  background: #fff;
}
.panel-title {
  display: flex;
  align-items: center;
  box-sizing: border-box;
  height: 16px;
  margin-top: 33px;
  border-top: 1px solid #9c9c9c;
  border-bottom: 1px solid #9c9c9c;
  background: #f0f0f0;
  font-size: 13px;
  letter-spacing: 0;
  margin-bottom: 3px;
  padding-bottom: 2px;
  box-shadow: 0 -33px 0 #f0f0f0;
}
.pin {
  width: 10px;
  height: 10px;
  margin-left: auto;
}
.shut {
  width: 10px;
  height: 10px;
  margin: 0 2px 0 9px;
}
.ptable {
  width: 258px;
  margin-left: 1px;
}
.c0 {
  width: 21px;
}
.c1 {
  width: 121px;
}
.c2 {
  width: 116px;
}
.ptable th {
  height: 23px;
  font-size: 12px;
  padding-bottom: 2px;
  background: linear-gradient(#ffffff, #ececec);
}
.ptable td.first {
  background: #fbd9a0;
  color: #800080;
}
.name {
  position: relative;
  padding-left: 20px !important;
}
.name.blue {
  color: #0000f0;
}
.name.cur {
  background: #0078d7;
  color: #fff;
}
.name.grp {
  color: #888;
}
.name.kid {
  padding-left: 30px !important;
}
.name.kid::before {
  content: "";
  position: absolute;
  left: 8px;
  top: 0;
  bottom: 0;
  width: 1px;
  background: #b8b8b8;
}
.name.kid.last::before {
  bottom: 50%;
}
.name.kid::after {
  content: "";
  position: absolute;
  left: 8px;
  top: 50%;
  width: 17px;
  height: 1px;
  background: #b8b8b8;
}
.fold {
  position: absolute;
  left: 2px;
  top: 3px;
  width: 12px;
  height: 12px;
  box-sizing: border-box;
  border: 1px solid #a8a8a8;
  color: #000;
  font: 12px/10px "Liberation Sans", sans-serif;
  text-align: center;
  letter-spacing: 0;
}
.val {
  padding-left: 1px !important;
  color: #808080;
}
.val .sym.under {
  color: #333;
  box-shadow: inset 0 -3px 0 -2px #333;
}

.phone {
  position: absolute;
  right: 0;
  top: 628px;
  width: 5px;
  height: 58px;
  border-radius: 3px 0 0 3px;
  background: #4a5058;
}
</style>

<style>
html,
body {
  margin: 0;
  background: #f0f0f0;
}
</style>
